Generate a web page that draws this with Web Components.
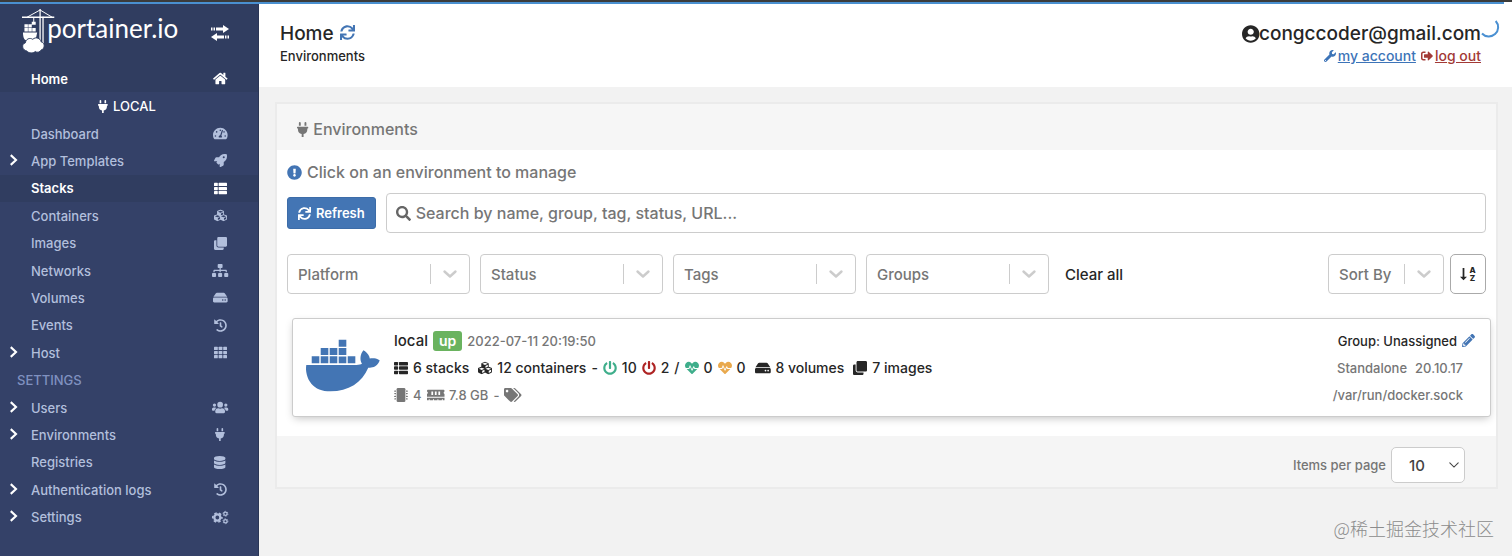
<!DOCTYPE html>
<html lang="en">
<head>
<meta charset="utf-8">
<meta name="viewport" content="width=device-width, initial-scale=1">
<title>Portainer</title>
<style>
  body {
    margin: 0;
    background: #f2f2f2;
    color: #262626;
    font-family: Inter, "Noto Sans CJK SC", sans-serif;
    font-size: 14px;
    font-weight: 500;
  }
</style>
</head>
<body>
<portainer-app></portainer-app>

<script>
// name: [viewBox width, viewBox height, markup]
const ICONS = {
  home: [576, 512, '<path d="M280.37 148.26L96 300.11V464a16 16 0 0 0 16 16l112.06-.29a16 16 0 0 0 15.92-16V368a16 16 0 0 1 16-16h64a16 16 0 0 1 16 16v95.64a16 16 0 0 0 16 16.05L464 480a16 16 0 0 0 16-16V300L295.67 148.26a12.19 12.19 0 0 0-15.3 0zM571.6 251.47L488 182.56V44.05a12 12 0 0 0-12-12h-56a12 12 0 0 0-12 12v72.61L318.47 43a48 48 0 0 0-61 0L4.34 251.47a12 12 0 0 0-1.6 16.9l25.5 31A12 12 0 0 0 45.15 301l235.22-193.74a12.19 12.19 0 0 1 15.3 0L530.9 301a12 12 0 0 0 16.9-1.6l25.5-31a12 12 0 0 0-1.7-16.93z"/>'],
  dashboard: [576, 512, '<path d="M288 32C128.94 32 0 160.94 0 320c0 52.8 14.25 102.26 39.06 144.8 5.61 9.62 16.3 15.2 27.44 15.2h443c11.14 0 21.83-5.58 27.44-15.2C561.75 422.26 576 372.8 576 320c0-159.06-128.94-288-288-288zm0 64c14.71 0 26.58 10.13 30.32 23.65-1.11 2.26-2.64 4.23-3.45 6.67l-9.22 27.67c-5.13 3.49-10.97 6.01-17.64 6.01-17.67 0-32-14.33-32-32S270.33 96 288 96zM96 384c-17.67 0-32-14.33-32-32s14.33-32 32-32 32 14.33 32 32-14.33 32-32 32zm48-160c-17.67 0-32-14.33-32-32s14.33-32 32-32 32 14.33 32 32-14.33 32-32 32zm246.77-72.41l-61.33 184C343.13 347.33 352 364.54 352 384c0 11.72-3.38 22.55-8.88 32H232.88c-5.5-9.45-8.88-20.28-8.88-32 0-33.94 26.5-61.43 59.9-63.59l61.34-184.01c4.17-12.56 17.73-19.45 30.36-15.17 12.57 4.19 19.35 17.79 15.17 30.36zm14.66 57.2l15.52-46.55c3.47-1.29 7.13-2.23 11.05-2.23 17.67 0 32 14.33 32 32s-14.33 32-32 32c-11.38-.01-20.89-6.28-26.57-15.22zM480 384c-17.67 0-32-14.33-32-32s14.33-32 32-32 32 14.33 32 32-14.33 32-32 32z"/>'],
  rocket: [512, 512, '<path d="M505.12 19.09c-1.19-5.53-6.66-11-12.21-12.19C460.72 0 435.51 0 410.41 0 307.18 0 245.27 55.2 199.05 128H94.84c-16.35.02-35.56 11.88-42.89 26.48L2.52 253.3A28.4 28.4 0 0 0 0 264a24 24 0 0 0 24 24h103.82l-22.48 22.47c-11.36 11.36-13 32.26 0 45.25l50.9 50.9c11.16 11.19 32.16 13.16 45.28 0L224 384.16V488a24 24 0 0 0 24 24 28.56 28.56 0 0 0 10.71-2.52l98.73-49.39c14.63-7.29 26.5-26.5 26.5-42.86V312.8c72.6-46.31 128.04-108.4 128.04-211.1.1-25.2.1-50.4-6.86-82.61zM384.04 168a40 40 0 1 1 40-40 40 40 0 0 1-40 40z"/>'],
  list: [512, 512, '<rect y="32" width="149" height="128" rx="24"/><rect x="181" y="32" width="331" height="128" rx="24"/><rect y="192" width="149" height="128" rx="24"/><rect x="181" y="192" width="331" height="128" rx="24"/><rect y="352" width="149" height="128" rx="24"/><rect x="181" y="352" width="331" height="128" rx="24"/>'],
  cubes: [512, 512, '<path d="M488.6 250.2L392 214V105.5c0-15-9.3-28.4-23.4-33.7l-100-37.5c-8.1-3.1-17.1-3.1-25.3 0l-100 37.5c-14.1 5.3-23.4 18.7-23.4 33.7V214l-96.6 36.2C9.3 255.5 0 268.9 0 283.9V394c0 13.6 7.7 26.1 19.9 32.2l100 50c10.1 5.1 22.1 5.1 32.2 0l103.9-52 103.9 52c10.1 5.1 22.1 5.1 32.2 0l100-50c12.2-6.1 19.9-18.6 19.9-32.2V283.9c0-15-9.3-28.4-23.4-33.7zM358 214.8l-85 31.9v-68.2l85-37v73.3zM154 104.1l102-38.2 102 38.2v.6l-102 41.4-102-41.4v-.6zm84 291.1l-85 42.5v-79.1l85-38.8v75.4zm0-112l-102 41.4-102-41.4v-.6l102-38.2 102 38.2v.6zm240 112l-85 42.5v-79.1l85-38.8v75.4zm0-112l-102 41.4-102-41.4v-.6l102-38.2 102 38.2v.6z"/>'],
  clone: [512, 512, '<path d="M464 0c26.51 0 48 21.49 48 48v288c0 26.51-21.49 48-48 48H176c-26.51 0-48-21.49-48-48V48c0-26.51 21.49-48 48-48h288M176 416c-44.112 0-80-35.888-80-80V128H48c-26.51 0-48 21.49-48 48v288c0 26.51 21.49 48 48 48h288c26.51 0 48-21.49 48-48v-48H176z"/>'],
  sitemap: [640, 512, '<path d="M128 352H32c-17.67 0-32 14.33-32 32v96c0 17.67 14.33 32 32 32h96c17.67 0 32-14.33 32-32v-96c0-17.67-14.33-32-32-32zm-24-80h192v48h48v-48h192v48h48v-57.59c0-21.17-17.23-38.41-38.41-38.41H344v-64h40c17.67 0 32-14.33 32-32V32c0-17.67-14.33-32-32-32H256c-17.67 0-32 14.33-32 32v96c0 17.67 14.33 32 32 32h40v64H94.41C73.23 224 56 241.23 56 262.41V320h48v-48zm264 80h-96c-17.67 0-32 14.33-32 32v96c0 17.67 14.33 32 32 32h96c17.67 0 32-14.33 32-32v-96c0-17.67-14.33-32-32-32zm240 0h-96c-17.67 0-32 14.33-32 32v96c0 17.67 14.33 32 32 32h96c17.67 0 32-14.33 32-32v-96c0-17.67-14.33-32-32-32z"/>'],
  hdd: [576, 512, '<path d="M576 304v96c0 26.51-21.49 48-48 48H48c-26.51 0-48-21.49-48-48v-96c0-26.51 21.49-48 48-48h480c26.51 0 48 21.49 48 48zm-48-80a79.557 79.557 0 0 1 30.777 6.165L462.25 85.374A48.003 48.003 0 0 0 422.311 64H153.689a48 48 0 0 0-39.938 21.374L17.223 230.165A79.557 79.557 0 0 1 48 224h480zm-48 96c-17.673 0-32 14.327-32 32s14.327 32 32 32 32-14.327 32-32-14.327-32-32-32zm-96 0c-17.673 0-32 14.327-32 32s14.327 32 32 32 32-14.327 32-32-14.327-32-32-32z"/>'],
  history: [512, 512, '<path d="M504 255.531c.253 136.64-111.18 248.372-247.82 248.468-59.015.042-113.223-20.53-155.822-54.911-11.077-8.94-11.905-25.541-1.839-35.607l11.267-11.267c8.609-8.609 22.353-9.551 31.891-1.984C173.062 425.135 212.781 440 256 440c101.705 0 184-82.311 184-184 0-101.705-82.311-184-184-184-48.814 0-93.149 18.969-126.068 49.932l50.754 50.754c10.08 10.08 2.941 27.314-11.313 27.314H24c-8.837 0-16-7.163-16-16V38.627c0-14.254 17.234-21.393 27.314-11.314l49.372 49.372C129.209 34.136 189.552 8 256 8c136.81 0 247.747 110.78 248 247.531zm-180.912 78.784l9.823-12.63c8.138-10.463 6.253-25.542-4.21-33.679L288 256.349V152c0-13.255-10.745-24-24-24h-16c-13.255 0-24 10.745-24 24v135.651l65.409 50.874c10.463 8.137 25.541 6.253 33.679-4.21z"/>'],
  grid: [512, 512, [32, 192, 352].map((y) => [0, 181, 363].map((x) => `<rect x="${x}" y="${y}" width="149" height="128" rx="22"/>`).join('')).join('')],
  users: [640, 512, '<circle cx="96" cy="160" r="64"/><circle cx="544" cy="160" r="64"/><circle cx="320" cy="144" r="112"/><path d="M0 320c0-35 29-64 64-64h64c18 0 34 7 45 19-40 22-69 62-75 109H32c-18 0-32-14-32-32zM640 320c0-35-29-64-64-64h-64c-18 0-34 7-45 19 40 22 69 62 75 109h66c18 0 32-14 32-32zM128 403c0-64 52-115 115-115h8c44 21 94 21 138 0h8c63 0 115 51 115 115v29c0 26-22 48-48 48H176c-26 0-48-22-48-48z"/>'],
  plug: [384, 512, '<path d="M320 32a32 32 0 0 0-64 0v96h64zm48 128H16a16 16 0 0 0-16 16v32a16 16 0 0 0 16 16h16v32a160.07 160.07 0 0 0 128 156.8V512h64v-99.2A160.07 160.07 0 0 0 352 256v-32h16a16 16 0 0 0 16-16v-32a16 16 0 0 0-16-16zM128 32a32 32 0 0 0-64 0v96h64z"/>'],
  database: [448, 512, '<path d="M448 73.143v45.714C448 159.143 347.667 192 224 192S0 159.143 0 118.857V73.143C0 32.857 100.333 0 224 0s224 32.857 224 73.143zM448 176v102.857C448 319.143 347.667 352 224 352S0 319.143 0 278.857V176c48.125 33.143 136.208 48.572 224 48.572S399.874 209.143 448 176zm0 160v102.857C448 479.143 347.667 512 224 512S0 479.143 0 438.857V336c48.125 33.143 136.208 48.572 224 48.572S399.874 369.143 448 336z"/>'],
  cogs: [640, 512, '<g fill="none" stroke="currentColor"><circle cx="210" cy="256" r="120" stroke-width="92"/><circle cx="210" cy="256" r="180" stroke-width="64" stroke-dasharray="98 90.5" stroke-dashoffset="49"/><circle cx="530" cy="110" r="66" stroke-width="50"/><circle cx="530" cy="110" r="98" stroke-width="32" stroke-dasharray="53 49.600"/><circle cx="530" cy="402" r="66" stroke-width="50"/><circle cx="530" cy="402" r="98" stroke-width="32" stroke-dasharray="53 49.600"/></g>'],
  sync: [512, 512, '<path d="M440.65 12.57l4 82.77A247.16 247.16 0 0 0 255.83 8C134.73 8 33.91 94.92 12.29 209.82A12 12 0 0 0 24.09 224h49.05a12 12 0 0 0 11.67-9.26 175.91 175.91 0 0 1 317-56.94l-101.46-4.86a12 12 0 0 0-12.57 12v47.41a12 12 0 0 0 12 12H500a12 12 0 0 0 12-12V12a12 12 0 0 0-12-12h-47.37a12 12 0 0 0-11.98 12.57zM255.83 432a175.61 175.61 0 0 1-146-77.8l101.8 4.87a12 12 0 0 0 12.57-12v-47.4a12 12 0 0 0-12-12H12a12 12 0 0 0-12 12V500a12 12 0 0 0 12 12h47.35a12 12 0 0 0 12-12.6l-4.15-82.57A247.17 247.17 0 0 0 255.83 504c121.11 0 221.93-86.92 243.55-201.82a12 12 0 0 0-11.8-14.18h-49.05a12 12 0 0 0-11.67 9.26A175.86 175.86 0 0 1 255.83 432z"/>'],
  info: [512, 512, '<path d="M504 256c0 136.997-111.043 248-248 248S8 392.997 8 256C8 119.083 119.043 8 256 8s248 111.083 248 248zm-248 50c-25.405 0-46 20.595-46 46s20.595 46 46 46 46-20.595 46-46-20.595-46-46-46zm-43.673-165.346l7.418 136c.347 6.364 5.609 11.346 11.982 11.346h48.546c6.373 0 11.635-4.982 11.982-11.346l7.418-136c.375-6.874-5.098-12.654-11.982-12.654h-63.383c-6.884 0-12.356 5.78-11.981 12.654z"/>'],
  search: [512, 512, '<path d="M505 442.7L405.3 343c-4.5-4.5-10.6-7-17-7H372c27.6-35.3 44-79.7 44-128C416 93.1 322.9 0 208 0S0 93.1 0 208s93.1 208 208 208c48.3 0 92.7-16.4 128-44v16.3c0 6.4 2.5 12.5 7 17l99.7 99.7c9.4 9.4 24.6 9.4 33.9 0l28.3-28.3c9.4-9.4 9.4-24.6.1-34zM208 336c-70.7 0-128-57.2-128-128 0-70.7 57.2-128 128-128 70.7 0 128 57.2 128 128 0 70.7-57.2 128-128 128z"/>'],
  user: [496, 512, '<path d="M248 8C111 8 0 119 0 256s111 248 248 248 248-111 248-248S385 8 248 8zm0 96c48.6 0 88 39.4 88 88s-39.4 88-88 88-88-39.4-88-88 39.4-88 88-88zm0 344c-58.7 0-111.3-26.6-146.5-68.2 18.8-35.4 55.6-59.8 98.5-59.8 2.4 0 4.8.4 7.1 1.1 13 4.2 26.6 6.9 40.9 6.9 14.3 0 28-2.7 40.9-6.9 2.3-.7 4.7-1.1 7.1-1.1 42.9 0 79.7 24.4 98.5 59.8C359.3 421.4 306.7 448 248 448z"/>'],
  wrench: [512, 512, '<path d="M507.73 109.1c-2.24-9.03-13.54-12.09-20.12-5.51l-74.36 74.36-67.88-11.31-11.31-67.88 74.36-74.36c6.62-6.62 3.43-17.9-5.66-20.16-47.38-11.74-99.55.91-136.58 37.93-39.64 39.64-50.55 97.1-34.05 147.2L18.74 402.76c-24.99 24.99-24.99 65.51 0 90.5 24.99 24.99 65.51 24.99 90.5 0l213.21-213.21c50.12 16.71 107.47 5.68 147.37-34.22 37.07-37.07 49.7-89.32 37.91-136.73zM64 472c-13.25 0-24-10.75-24-24 0-13.26 10.75-24 24-24s24 10.74 24 24c0 13.25-10.75 24-24 24z"/>'],
  logout: [512, 512, '<path d="M497 273L329 441c-15 15-41 4.5-41-17v-96H152c-13.3 0-24-10.7-24-24v-96c0-13.3 10.7-24 24-24h136V88c0-21.4 25.9-32 41-17l168 168c9.3 9.4 9.3 24.6 0 34zM192 436v-40c0-6.6-5.4-12-12-12H96c-17.7 0-32-14.3-32-32V160c0-17.7 14.3-32 32-32h84c6.6 0 12-5.4 12-12V76c0-6.6-5.4-12-12-12H96c-53 0-96 43-96 96v192c0 53 43 96 96 96h84c6.6 0 12-5.4 12-12z"/>'],
  power: [512, 512, '<path d="M400 54.1c63 45 104 118.6 104 201.9 0 136.8-110.8 247.7-247.5 248C120 504.3 8.2 393 8 256.4 7.9 173.1 48.9 99.3 111.8 54.2c11.7-8.3 28-4.8 35 7.7L162.6 90c5.9 10.5 3.1 23.8-6.6 31-41.5 30.8-68 79.6-68 134.9-.1 92.3 74.5 168.1 168 168.1 91.6 0 168.6-74.2 168-169.1-.3-51.8-24.7-101.8-68.1-134-9.7-7.2-12.4-20.5-6.5-30.9l15.8-28.1c7-12.4 23.2-16.1 34.8-7.8zM296 264V24c0-13.3-10.7-24-24-24h-32c-13.3 0-24 10.7-24 24v240c0 13.3 10.7 24 24 24h32c13.3 0 24-10.7 24-24z"/>'],
  heart: [512, 512, '<path d="M320.2 243.8l-49.7 99.4c-6 12.1-23.4 11.7-28.9-.6l-56.9-126.3-30 71.7H60.6l182.5 186.5c7.1 7.3 18.6 7.3 25.7 0L451.4 288H342.3l-22.1-44.2zM473.7 73.9l-2.4-2.5c-51.5-52.6-135.8-52.6-187.4 0L256 100l-27.9-28.5c-51.5-52.7-135.9-52.7-187.4 0l-2.4 2.4C-10.4 123.7-12.5 203 31 256h102.4l35.9-86.2c5.4-12.9 23.6-13.1 29.2-.4l58.2 129.3 49-97.9c5.9-11.8 22.7-11.8 28.6 0l27.6 55.2H481c43.5-53 41.4-132.3-7.3-182.1z"/>'],
  chip: [512, 512, '<rect x="96" width="320" height="512" rx="48"/>' + [88, 184, 280, 376].map((y) => `<path d="M0 ${y + 14}h24V${y}h48v48H24v-12H0zM512 ${y + 14}h-24V${y}h-48v48h48v-12h24z"/>`).join('')],
  memory: [640, 512, '<path d="M640 130.94V96c0-17.67-14.33-32-32-32H32c-17.67 0-32 14.33-32 32v34.94c18.6 6.61 32 24.19 32 45.06s-13.4 38.45-32 45.06V320h640v-98.94c-18.6-6.61-32-24.19-32-45.06s13.4-38.45 32-45.06zM224 256h-64V128h64v128zm128 0h-64V128h64v128zm128 0h-64V128h64v128zM0 448h64v-26.67c0-8.84 7.16-16 16-16s16 7.16 16 16V448h128v-26.67c0-8.84 7.16-16 16-16s16 7.16 16 16V448h128v-26.67c0-8.84 7.16-16 16-16s16 7.16 16 16V448h128v-26.67c0-8.84 7.16-16 16-16s16 7.16 16 16V448h64v-96H0v96z"/>'],
  tags: [640, 512, '<path d="M497.941 225.941L286.059 14.059A48 48 0 0 0 252.118 0H48C21.49 0 0 21.49 0 48v204.118a48 48 0 0 0 14.059 33.941l211.882 211.882c18.744 18.745 49.136 18.746 67.882 0l204.118-204.118c18.745-18.745 18.745-49.137 0-67.882zM112 160c-26.51 0-48-21.49-48-48s21.49-48 48-48 48 21.49 48 48-21.49 48-48 48zm513.941 133.823L421.823 497.941c-18.745 18.745-49.137 18.745-67.882 0l-.36-.36L527.64 323.522c16.999-16.999 26.36-39.6 26.36-63.64s-9.362-46.641-26.36-63.64L331.397 0h48.721a48 48 0 0 1 33.941 14.059l211.882 211.882c18.745 18.745 18.745 49.137 0 67.882z"/>'],
  pencil: [512, 512, '<path d="M497.9 142.1l-46.1 46.1c-4.7 4.7-12.3 4.7-17 0l-111-111c-4.7-4.7-4.7-12.3 0-17l46.1-46.1c18.7-18.7 49.1-18.7 67.9 0l60.1 60.1c18.8 18.7 18.8 49.1 0 67.9zM284.2 99.8L21.6 362.4.4 483.9c-2.9 16.4 11.4 30.6 27.8 27.8l121.5-21.3 262.6-262.6c4.7-4.7 4.7-12.3 0-17l-111-111c-4.8-4.7-12.4-4.7-17.1 0zM124.1 339.9c-5.5-5.5-5.5-14.3 0-19.8l154-154c5.5-5.5 14.3-5.5 19.8 0s5.5 14.3 0 19.8l-154 154c-5.5 5.5-14.3 5.5-19.8 0zM88 424h48v36.3l-64.5 11.3-31.1-31.1L51.7 376H88v48z"/>'],
  docker: [640, 512, '<path d="M349.9 236.3h-66.1v-59.4h66.1v59.4zm0-204.3h-66.1v60.7h66.1V32zm78.2 144.8H362v59.4h66.1v-59.4zm-156.3-72.1h-66.1v60.1h66.1v-60.1zm78.1 0h-66.1v60.1h66.1v-60.1zm276.8 100c-14.4-9.7-47.6-13.2-73.1-8.4-3.3-24-16.7-44.9-41.1-63.7l-14-9.3-9.3 14c-18.4 27.8-23.4 73.6-3.7 103.8-8.7 4.7-25.8 11.1-48.4 10.7H2.4c-8.7 50.8 5.8 116.8 44 162.1 37.1 43.9 92.7 66.2 165.4 66.2 157.4 0 273.9-72.5 328.4-204.2 21.4.4 67.6.1 91.3-45.2 1.5-2.5 6.6-13.2 8.5-17.1l-13.3-8.9zm-511.1-27.9h-66v59.4h66.1v-59.4zm78.1 0h-66.1v59.4h66.1v-59.4zm78.1 0h-66.1v59.4h66.1v-59.4zm-78.1-72.1h-66.1v60.1h66.1v-60.1z"/>'],
  right: [16, 16, '<path d="M5 1.5l7 6.5-7 6.5" fill="none" stroke="currentColor" stroke-width="2.8"/>'],
  down: [20, 20, '<path d="M4.5 7.5l5.5 5 5.5-5" fill="none" stroke="currentColor" stroke-width="2.4" stroke-linecap="round" stroke-linejoin="round"/>'],
  thin: [20, 20, '<path d="M3 6.500l7 7 7-7" fill="none" stroke="currentColor" stroke-width="1.8" stroke-linecap="round"/>'],
  arrow: [8, 16, '<path d="M3 1h2v10h3l-4 4-4-4h3z"/>'],
  toggle: [20, 16, '<path d="M1 2.500h1.500v3H1zM3.500 2.500H5v3H3.500zM6 2.500h7V0l6 4-6 4V5.500H6zM19 10.500h-1.500v3H19zM16.500 10.500H15v3h1.500zM14 10.500H7V8l-6 4 6 4v-2.500h7z"/>'],
  spinner: [18, 18, '<path d="M15.700 2A8 8 0 0 1 2 14.500" fill="none" stroke="#4a90d2" stroke-width="2"/>'],
  // harbour crane holding a whale-shaped stack of boxes above a cloud
  crane: [34, 46, '<g fill="none" stroke="currentColor"><path d="M0 8.500h33" stroke-width="1.600"/><path d="M18.500 0v40M21.500 8v30" stroke-width="1.300"/><path d="M18.500 1L5 8.500M18.500 1L31 8.500" stroke-width="1"/><path d="M12 9v5" stroke-width="1"/></g><path d="M10 13h4v3h-4zM2.500 15.500h3.500v3.500H2.500zM6.500 15.500H10v3.500H6.500zM2.500 19.500h3.500V23H2.500zM6.500 19.500H10V23H6.500zM10.500 19.500H14V23h-3.500zM1 24h14.500l-1 5-2 3H5c-3 0-4-4-4-8z"/><path d="M5 43c-5-1-6-7-1.500-8.500C4 30.500 8 29 11 31c3-3 8-1 8.500 2.500 4 1 4.500 7 0 8.500-1 2-4 3-6 1.500-2 2-6.500 2-8.500-.5z" stroke="#303f62"/>'],
};

class AppIcon extends HTMLElement {
  constructor() {
    super();
    this.attachShadow({ mode: 'open' });
  }

  connectedCallback() {
    const [w, h, markup] = ICONS[this.getAttribute('name')];
    this.shadowRoot.innerHTML = `
      <style>
        :host { display: inline-flex; flex: none; }
        svg { display: block; height: var(--icon-size, 14px); fill: currentColor; overflow: visible; }
      </style>
      <svg viewBox="0 0 ${w} ${h}" aria-hidden="true">${markup}</svg>
    `;
  }
}
customElements.define('app-icon', AppIcon);

class NavItem extends HTMLElement {
  constructor() {
    super();
    this.attachShadow({ mode: 'open' });
  }

  connectedCallback() {
    this.shadowRoot.innerHTML = `
      <style>
        :host { display: flex; flex: 1; min-height: 27px; color: #b2bfdc; }
        :host([active]) { background: #303d60; color: #fff; font-weight: 600; }
        a {
          flex: 1;
          display: grid;
          grid-template-columns: 31px 1fr 16px;
          align-items: center;
          padding-right: 30px;
          color: inherit;
          text-decoration: none;
        }
        .caret { color: #fff; padding-left: 7px; --icon-size: 12px; }
        .icon { justify-self: center; --icon-size: 13px; }
      </style>
      <a href="#">
        <span class="caret">${this.hasAttribute('expandable') ? '<app-icon name="right"></app-icon>' : ''}</span>
        <slot></slot>
        <app-icon class="icon" name="${this.getAttribute('icon')}"></app-icon>
      </a>
    `;
  }
}
customElements.define('nav-item', NavItem);

const sidebarTemplate = document.createElement('template');
sidebarTemplate.innerHTML = `
  <style>
    :host {
      display: flex;
      flex-direction: column;
      box-sizing: border-box;
      padding-bottom: 25px;
      background: #344168;
      border-right: 1px solid #2a3656;
      font-size: 13px;
    }
    header {
      display: flex;
      justify-content: space-between;
      align-items: flex-start;
      box-sizing: border-box;
      height: 61px;
      padding: 5px 28px 0 22px;
      background: #303d60;
      color: #fff;
    }
    .logo {
      display: flex;
      color: #fff;
      font: 400 26px/30px Lato, sans-serif;
      text-decoration: none;
      --icon-size: 45px;
    }
    .logo span { margin-left: -8px; padding-top: 4px; }
    button {
      margin-top: 16px;
      padding: 0;
      border: 0;
      background: none;
      color: inherit;
      --icon-size: 16px;
    }
    nav { flex: 1; display: flex; flex-direction: column; }
    .endpoint, .title {
      flex: 1;
      display: flex;
      align-items: center;
      gap: 5px;
      min-height: 27px;
    }
    .endpoint { justify-content: center; padding-right: 4px; color: #fff; --icon-size: 13px; }
    .title { padding-left: 17px; color: #8091c0; }
  </style>
  <header>
    <a class="logo" href="#"><app-icon name="crane"></app-icon><span>portainer.io</span></a>
    <button aria-label="Toggle sidebar"><app-icon name="toggle"></app-icon></button>
  </header>
  <nav>
    <nav-item icon="home" active>Home</nav-item>
    <div class="endpoint"><app-icon name="plug"></app-icon>LOCAL</div>
    <nav-item icon="dashboard">Dashboard</nav-item>
    <nav-item icon="rocket" expandable>App Templates</nav-item>
    <nav-item icon="list" active>Stacks</nav-item>
    <nav-item icon="cubes">Containers</nav-item>
    <nav-item icon="clone">Images</nav-item>
    <nav-item icon="sitemap">Networks</nav-item>
    <nav-item icon="hdd">Volumes</nav-item>
    <nav-item icon="history">Events</nav-item>
    <nav-item icon="grid" expandable>Host</nav-item>
    <div class="title">SETTINGS</div>
    <nav-item icon="users" expandable>Users</nav-item>
    <nav-item icon="plug" expandable>Environments</nav-item>
    <nav-item icon="database">Registries</nav-item>
    <nav-item icon="history" expandable>Authentication logs</nav-item>
    <nav-item icon="cogs" expandable>Settings</nav-item>
  </nav>
`;

class SideBar extends HTMLElement {
  constructor() {
    super();
    this.attachShadow({ mode: 'open' });
    this.shadowRoot.appendChild(sidebarTemplate.content.cloneNode(true));
  }
}
customElements.define('side-bar', SideBar);

const headerTemplate = document.createElement('template');
headerTemplate.innerHTML = `
  <style>
    :host {
      display: flex;
      justify-content: space-between;
      box-sizing: border-box;
      min-height: 83px;
      padding: 18px 31px 0 21px;
      background: #fff;
    }
    h1 {
      display: flex;
      align-items: center;
      gap: 6px;
      margin: 0;
      font-size: 19px;
      font-weight: 500;
      line-height: 24px;
    }
    h1 button {
      padding: 0;
      border: 0;
      background: none;
      color: #4375b4;
      --icon-size: 15px;
    }
    .crumb { font-size: 13px; line-height: 20px; }
    .account { text-align: right; }
    .name {
      display: flex;
      align-items: center;
      justify-content: flex-end;
      font-size: 19px;
      line-height: 24px;
      --icon-size: 18px;
    }
    .links {
      display: flex;
      justify-content: flex-end;
      gap: 5px;
      font-size: 14px;
      line-height: 20px;
      --icon-size: 12px;
    }
    a { display: flex; align-items: center; gap: 2px; color: #3d74b8; text-decoration: none; }
    a span { text-decoration: underline; }
    .danger { color: #a33a36; }
  </style>
  <div>
    <h1>Home <button aria-label="Reload"><app-icon name="sync"></app-icon></button></h1>
    <div class="crumb">Environments</div>
  </div>
  <div class="account">
    <div class="name"><app-icon name="user"></app-icon>congccoder@gmail.com</div>
    <div class="links">
      <a href="#"><app-icon name="wrench"></app-icon><span>my account</span></a>
      <a class="danger" href="#"><app-icon name="logout"></app-icon><span>log out</span></a>
    </div>
  </div>
`;

class PageHeader extends HTMLElement {
  constructor() {
    super();
    this.attachShadow({ mode: 'open' });
    this.shadowRoot.appendChild(headerTemplate.content.cloneNode(true));
  }
}
customElements.define('page-header', PageHeader);

class FilterSelect extends HTMLElement {
  constructor() {
    super();
    this.attachShadow({ mode: 'open' });
  }

  connectedCallback() {
    const label = this.getAttribute('label');
    this.shadowRoot.innerHTML = `
      <style>
        :host { display: block; flex: 0 1 183px; }
        :host([compact]) { flex-basis: 116px; }
        .box {
          display: grid;
          grid-template-columns: 1fr 39px;
          align-items: center;
          box-sizing: border-box;
          height: 40px;
          border: 1px solid #ccc;
          border-radius: 4px;
          background: #fff;
        }
        select {
          grid-area: 1 / 1 / 2 / 3;
          width: 100%;
          height: 100%;
          padding: 0 40px 0 10px;
          border: 0;
          background: none;
          color: #767676;
          font: inherit;
          font-size: 15px;
          appearance: none;
        }
        .arrow {
          grid-area: 1 / 2;
          display: flex;
          justify-content: center;
          border-left: 1px solid #ccc;
          color: #ccc;
          pointer-events: none;
          --icon-size: 20px;
        }
      </style>
      <div class="box">
        <select aria-label="${label}"><option>${label}</option></select>
        <span class="arrow"><app-icon name="down"></app-icon></span>
      </div>
    `;
  }
}
customElements.define('filter-select', FilterSelect);

const environmentTemplate = document.createElement('template');
environmentTemplate.innerHTML = `
  <style>
    :host {
      display: flex;
      box-sizing: border-box;
      padding: 8px 15px 8px 13px;
      border: 1px solid #ccc;
      border-radius: 3px;
      background: #fff;
      box-shadow: 0 3px 8px -2px rgba(0, 0, 0, .25);
    }
    .logo { width: 88px; padding-top: 9px; color: #4375b4; --icon-size: 59px; }
    .info { flex: 1; }
    .row { display: flex; align-items: center; gap: 5px; height: 27px; font-size: 14px; white-space: nowrap; }
    .name { font-size: 15px; }
    .badge { padding: 0 6px; border-radius: 3px; background: #6ab35f; color: #fff; font-size: 14px; font-weight: 600; line-height: 20px; }
    .muted { color: #767676; font-size: 13px; }
    .stat { margin-right: 4px; }
    .up { color: #3fae8b; }
    .down { color: #ae2323; }
    .warn { color: #e9a94d; }
    .side { display: flex; flex-direction: column; align-items: flex-end; }
    .side .row { font-size: 13px; }
    .side .muted { padding-right: 12px; gap: 8px; }
    a { display: flex; color: #4375b4; --icon-size: 13px; }
  </style>
  <div class="logo"><app-icon name="docker"></app-icon></div>
  <div class="info">
    <div class="row">
      <span class="name">local</span>
      <span class="badge">up</span>
      <span class="muted">2022-07-11 20:19:50</span>
    </div>
    <div class="row">
      <app-icon name="list"></app-icon><span class="stat">6 stacks</span>
      <app-icon name="cubes"></app-icon><span>12 containers</span>
      <span>-</span>
      <app-icon class="up" name="power"></app-icon><span>10</span>
      <app-icon class="down" name="power"></app-icon><span>2</span>
      <span>/</span>
      <app-icon class="up" name="heart"></app-icon><span>0</span>
      <app-icon class="warn" name="heart"></app-icon><span class="stat">0</span>
      <app-icon name="hdd"></app-icon><span class="stat">8 volumes</span>
      <app-icon name="clone"></app-icon><span>7 images</span>
    </div>
    <div class="row muted">
      <app-icon name="chip"></app-icon><span>4</span>
      <app-icon name="memory"></app-icon><span>7.8 GB</span>
      <span>-</span>
      <app-icon name="tags"></app-icon>
    </div>
  </div>
  <div class="side">
    <div class="row"><span>Group: Unassigned</span><a href="#" aria-label="Edit"><app-icon name="pencil"></app-icon></a></div>
    <div class="row muted"><span>Standalone</span><span>20.10.17</span></div>
    <div class="row muted">/var/run/docker.sock</div>
  </div>
`;

class EnvironmentItem extends HTMLElement {
  constructor() {
    super();
    this.attachShadow({ mode: 'open' });
    this.shadowRoot.appendChild(environmentTemplate.content.cloneNode(true));
  }
}
customElements.define('environment-item', EnvironmentItem);

const widgetTemplate = document.createElement('template');
widgetTemplate.innerHTML = `
  <style>
    :host { display: block; border: 2px solid #ebebeb; background: #fff; }
    header {
      display: flex;
      align-items: center;
      gap: 5px;
      box-sizing: border-box;
      height: 46px;
      padding: 4px 20px 0;
      background: #f6f6f6;
      color: #767676;
      font-size: 16px;
      --icon-size: 15px;
    }
    footer {
      display: flex;
      align-items: center;
      justify-content: flex-end;
      gap: 5px;
      padding: 11px 31px 4px 0;
      background: #f5f5f5;
    }
  </style>
  <header><slot name="title"></slot></header>
  <slot></slot>
  <footer><slot name="footer"></slot></footer>
`;

class AppWidget extends HTMLElement {
  constructor() {
    super();
    this.attachShadow({ mode: 'open' });
    this.shadowRoot.appendChild(widgetTemplate.content.cloneNode(true));
  }
}
customElements.define('app-widget', AppWidget);

const homeTemplate = document.createElement('template');
homeTemplate.innerHTML = `
  <style>
    :host { display: block; padding: 15px 14px 0 16px; }
    button { font: inherit; }
    .hint, .bar, .filters { display: flex; align-items: center; padding: 0 10px; gap: 10px; }
    .hint { gap: 5px; padding-top: 10px; color: #767676; font-size: 16px; line-height: 24px; --icon-size: 15px; }
    .hint app-icon { color: #4375b4; }
    .bar { padding-top: 9px; }
    .refresh {
      display: flex;
      align-items: center;
      gap: 5px;
      height: 32px;
      padding: 0 10px;
      border: 1px solid #3c6ca8;
      border-radius: 3px;
      background: #4375b4;
      color: #fff;
      font-size: 13px;
      font-weight: 600;
      --icon-size: 13px;
    }
    .search {
      flex: 1;
      display: flex;
      align-items: center;
      gap: 5px;
      box-sizing: border-box;
      height: 40px;
      padding: 0 9px;
      border: 1px solid #ccc;
      border-radius: 4px;
      color: #666;
      --icon-size: 15px;
    }
    input { flex: 1; padding: 0; border: 0; outline: 0; background: none; color: #333; font: inherit; font-size: 16px; }
    input::placeholder { color: #767676; opacity: 1; }
    .filters { padding-top: 21px; }
    .clear { margin-right: auto; padding: 0 6px; border: 0; background: none; color: #262626; font-size: 15px; }
    .order {
      display: flex;
      align-items: center;
      justify-content: center;
      gap: 2px;
      width: 36px;
      height: 40px;
      margin-left: -4px;
      padding: 0;
      border: 1px solid #aaa;
      border-radius: 5px;
      background: #fff;
      color: #262626;
      --icon-size: 14px;
    }
    .letters { display: grid; font-size: 8px; font-weight: 800; line-height: 8px; }
    environment-item { margin: 24px 5px 19px 15px; }
    label { color: #767676; font-size: 13px; }
    .pages { display: grid; grid-template-columns: 1fr 17px; align-items: center; width: 74px; }
    .pages select {
      grid-area: 1 / 1 / 2 / 3;
      height: 36px;
      padding: 0 17px;
      border: 1px solid #ccc;
      border-radius: 5px;
      background: #fff;
      color: #444;
      font: inherit;
      font-size: 15px;
      appearance: none;
    }
    .pages app-icon { grid-area: 1 / 2; color: #444; pointer-events: none; --icon-size: 12px; }
  </style>
  <app-widget>
    <app-icon slot="title" name="plug"></app-icon><span slot="title">Environments</span>
    <div class="hint"><app-icon name="info"></app-icon>Click on an environment to manage</div>
    <div class="bar">
      <button class="refresh"><app-icon name="sync"></app-icon>Refresh</button>
      <div class="search">
        <app-icon name="search"></app-icon>
        <input type="text" aria-label="Search" placeholder="Search by name, group, tag, status, URL...">
      </div>
    </div>
    <div class="filters">
      <filter-select label="Platform"></filter-select>
      <filter-select label="Status"></filter-select>
      <filter-select label="Tags"></filter-select>
      <filter-select label="Groups"></filter-select>
      <button class="clear">Clear all</button>
      <filter-select label="Sort By" compact></filter-select>
      <button class="order" aria-label="Sort order">
        <app-icon name="arrow"></app-icon>
        <span class="letters"><span>A</span><span>Z</span></span>
      </button>
    </div>
    <environment-item></environment-item>
    <label slot="footer" for="pages">Items per page</label>
    <div slot="footer" class="pages">
      <select id="pages"><option>10</option></select>
      <app-icon name="thin"></app-icon>
    </div>
  </app-widget>
`;

class HomeView extends HTMLElement {
  constructor() {
    super();
    this.attachShadow({ mode: 'open' });
    this.shadowRoot.appendChild(homeTemplate.content.cloneNode(true));
  }
}
customElements.define('home-view', HomeView);

const appTemplate = document.createElement('template');
appTemplate.innerHTML = `
  <style>
    :host {
      display: grid;
      grid-template-columns: 259px minmax(0, 1fr);
      grid-template-rows: auto 1fr;
      min-height: 100vh;
    }
    .progress { grid-column: 1 / 3; height: 2px; border-top: 2px solid #3b3b3b; background: #fff; }
    .progress div { height: 2px; margin-right: 8px; background: #4a90d0; }
    /* page loading spinner, over the header */
    .spinner { position: absolute; top: 19px; right: 14px; --icon-size: 18px; }
    .watermark {
      position: absolute;
      right: 18px;
      bottom: 14px;
      color: #8c8c8c;
      font: 300 18px/28px "Noto Sans CJK SC", sans-serif;
    }
  </style>
  <div class="progress"><div></div></div>
  <side-bar></side-bar>
  <main>
    <page-header></page-header>
    <home-view></home-view>
  </main>
  <app-icon class="spinner" name="spinner"></app-icon>
  <div class="watermark">@稀土掘金技术社区</div>
`;

class PortainerApp extends HTMLElement {
  constructor() {
    super();
    this.attachShadow({ mode: 'open' });
    this.shadowRoot.appendChild(appTemplate.content.cloneNode(true));
  }
}
customElements.define('portainer-app', PortainerApp);
</script>
</body>
</html>
